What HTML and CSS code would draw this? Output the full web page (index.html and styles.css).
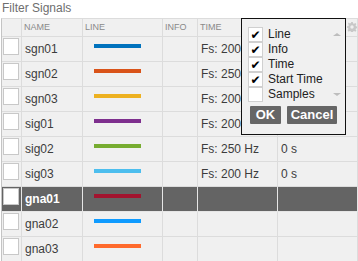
FILE: index.html
```html
<!DOCTYPE html>
<html lang="en">
<head>
    <meta charset="UTF-8">
    <title>Filter Signals</title>
    <link rel="stylesheet" href="styles.css">
</head>
<body>
    <div class="title">Filter Signals</div>
    <div class="table">
        <div class="row head">
            <div class="cell"></div>
            <div class="cell">NAME</div>
            <div class="cell">LINE</div>
            <div class="cell">INFO</div>
            <div class="cell">TIME</div>
            <div class="cell"></div>
        </div>
        <div class="row">
            <div class="cell"><span class="box"></span></div>
            <div class="cell">sgn01</div>
            <div class="cell"><span class="swatch" style="background:#0072bd"></span></div>
            <div class="cell"></div>
            <div class="cell">Fs: 200 Hz</div>
            <div class="cell">0 s</div>
        </div>
        <div class="row">
            <div class="cell"><span class="box"></span></div>
            <div class="cell">sgn02</div>
            <div class="cell"><span class="swatch" style="background:#d95319"></span></div>
            <div class="cell"></div>
            <div class="cell">Fs: 250 Hz</div>
            <div class="cell">0 s</div>
        </div>
        <div class="row">
            <div class="cell"><span class="box"></span></div>
            <div class="cell">sgn03</div>
            <div class="cell"><span class="swatch" style="background:#edb120"></span></div>
            <div class="cell"></div>
            <div class="cell">Fs: 200 Hz</div>
            <div class="cell">0 s</div>
        </div>
        <div class="row">
            <div class="cell"><span class="box"></span></div>
            <div class="cell">sig01</div>
            <div class="cell"><span class="swatch" style="background:#7e2f8e"></span></div>
            <div class="cell"></div>
            <div class="cell">Fs: 200 Hz</div>
            <div class="cell">0 s</div>
        </div>
        <div class="row">
            <div class="cell"><span class="box"></span></div>
            <div class="cell">sig02</div>
            <div class="cell"><span class="swatch" style="background:#77ac30"></span></div>
            <div class="cell"></div>
            <div class="cell">Fs: 250 Hz</div>
            <div class="cell">0 s</div>
        </div>
        <div class="row">
            <div class="cell"><span class="box"></span></div>
            <div class="cell">sig03</div>
            <div class="cell"><span class="swatch" style="background:#4dbeee"></span></div>
            <div class="cell"></div>
            <div class="cell">Fs: 200 Hz</div>
            <div class="cell">0 s</div>
        </div>
        <div class="row selected">
            <div class="cell"><span class="box"></span></div>
            <div class="cell">gna01</div>
            <div class="cell"><span class="swatch" style="background:#a2142f"></span></div>
            <div class="cell"></div>
            <div class="cell"></div>
            <div class="cell"></div>
        </div>
        <div class="row">
            <div class="cell"><span class="box"></span></div>
            <div class="cell">gna02</div>
            <div class="cell"><span class="swatch" style="background:#0f9bff"></span></div>
            <div class="cell"></div>
            <div class="cell"></div>
            <div class="cell"></div>
        </div>
        <div class="row">
            <div class="cell"><span class="box"></span></div>
            <div class="cell">gna03</div>
            <div class="cell"><span class="swatch" style="background:#ff6a2c"></span></div>
            <div class="cell"></div>
            <div class="cell"></div>
            <div class="cell"></div>
        </div>
    </div>

    <!-- gear -->
    <svg class="gear" width="10" height="10" viewBox="0 0 10 10">
        <path fill="#c8c8c8" fill-rule="evenodd" d="M4.2 0h1.6l.3 1.4 1 .4 1.2-.8 1.1 1.1-.8 1.2.4 1 1.4.3v1.6l-1.4.3-.4 1 .8 1.2-1.1 1.1-1.2-.8-1 .4-.3 1.4H4.2l-.3-1.4-1-.4-1.2.8L.6 8.3l.8-1.2-.4-1L0 5.8V4.2l1.4-.3.4-1-.8-1.2L1.7.6l1.2.8 1-.4z M5 3.3a1.7 1.7 0 1 0 0 3.4 1.7 1.7 0 1 0 0-3.4z"/>
    </svg>

    <!-- column chooser -->
    <div class="popup">
        <div class="choices">
            <div class="list">
                <div class="item"><span class="check">&#10004;</span><span>Line</span></div>
                <div class="item"><span class="check">&#10004;</span><span>Info</span></div>
                <div class="item"><span class="check">&#10004;</span><span>Time</span></div>
                <div class="item"><span class="check">&#10004;</span><span>Start Time</span></div>
                <div class="item"><span class="check"></span><span>Samples</span></div>
            </div>
            <div class="arrows">
                <span class="up"></span>
                <span class="down"></span>
            </div>
        </div>
        <div class="buttons">
            <button class="btn ok">OK</button>
            <button class="btn cancel">Cancel</button>
        </div>
    </div>
</body>
</html>
```

FILE: styles.css
```css
body {
    margin: 0;
    font-family: "Liberation Sans", Arial, sans-serif;
    background-color: #fff;
    position: relative;
    width: 358px;
    height: 261px;
    overflow: hidden;
}
.title {
    height: 18px;
    line-height: 17px;
    padding-left: 2px;
    font-size: 12px;
    color: #6e6e6e;
}
.table {
    margin-left: 1px;
    border-left: 1px solid #c4c4c4;
    border-top: 1px solid #dcdcdc;
    background-color: #f0f0f0;
}
.row {
    display: grid;
    grid-template-columns: 20px 61px 80px 35px 80px 1fr;
    height: 25px;
}
.cell {
    box-sizing: border-box;
    border-right: 1px solid #dcdcdc;
    border-bottom: 1px solid #dcdcdc;
    padding-left: 3px;
    font-size: 12px;
    line-height: 24px;
    color: #3c3c3c;
    white-space: nowrap;
    overflow: hidden;
}
.row .cell:first-child {
    padding-left: 1px;
}
.head {
    height: 18px;
}
.head .cell {
    font-size: 9px;
    line-height: 17px;
    color: #8a8a8a;
    padding-left: 2px;
}
.box {
    display: block;
    box-sizing: border-box;
    width: 16px;
    height: 17px;
    margin-top: 1px;
    background-color: #fff;
    border: 1px solid #c8c8c8;
}
.swatch {
    display: block;
    width: 47px;
    height: 4px;
    margin: 7px 0 0 8px;
}
.selected {
    background-color: #646464;
}
.selected .cell {
    color: #fff;
    font-weight: bold;
    border-color: #e6e6e6;
}
.gear {
    position: absolute;
    left: 347px;
    top: 22px;
}
.popup {
    position: absolute;
    left: 241px;
    top: 18px;
    width: 103px;
    height: 115px;
    border: 1px solid #111;
    background-color: #f0f0f0;
}
.choices {
    display: flex;
    margin: 8px 0 0 6px;
}
.list {
    width: 82px;
}
.item {
    display: flex;
    align-items: center;
    height: 15px;
    font-size: 12px;
    line-height: 15px;
    color: #222;
    white-space: nowrap;
}
.check {
    flex: none;
    box-sizing: border-box;
    width: 15px;
    height: 15px;
    margin-right: 5px;
    background-color: #fff;
    border: 1px solid #d0d0d0;
    font-family: "DejaVu Sans", sans-serif;
    font-size: 12px;
    line-height: 14px;
    text-align: center;
    color: #000;
}
.arrows {
    display: flex;
    flex-direction: column;
    justify-content: space-between;
    padding: 6px 0 6px 3px;
    height: 63px;
}
.up {
    width: 0;
    height: 0;
    border-left: 4px solid transparent;
    border-right: 4px solid transparent;
    border-bottom: 3px solid #bdbdbd;
}
.down {
    width: 0;
    height: 0;
    border-left: 4px solid transparent;
    border-right: 4px solid transparent;
    border-top: 3px solid #bdbdbd;
}
.buttons {
    display: flex;
    gap: 6px;
    margin: 4px 0 0 8px;
}
.btn {
    height: 18px;
    padding: 0;
    border: none;
    border-radius: 1px;
    background-color: #666;
    color: #fff;
    font-family: "Liberation Sans", Arial, sans-serif;
    font-size: 13px;
    font-weight: bold;
    line-height: 18px;
}
.ok {
    width: 31px;
}
.cancel {
    width: 50px;
}
```
